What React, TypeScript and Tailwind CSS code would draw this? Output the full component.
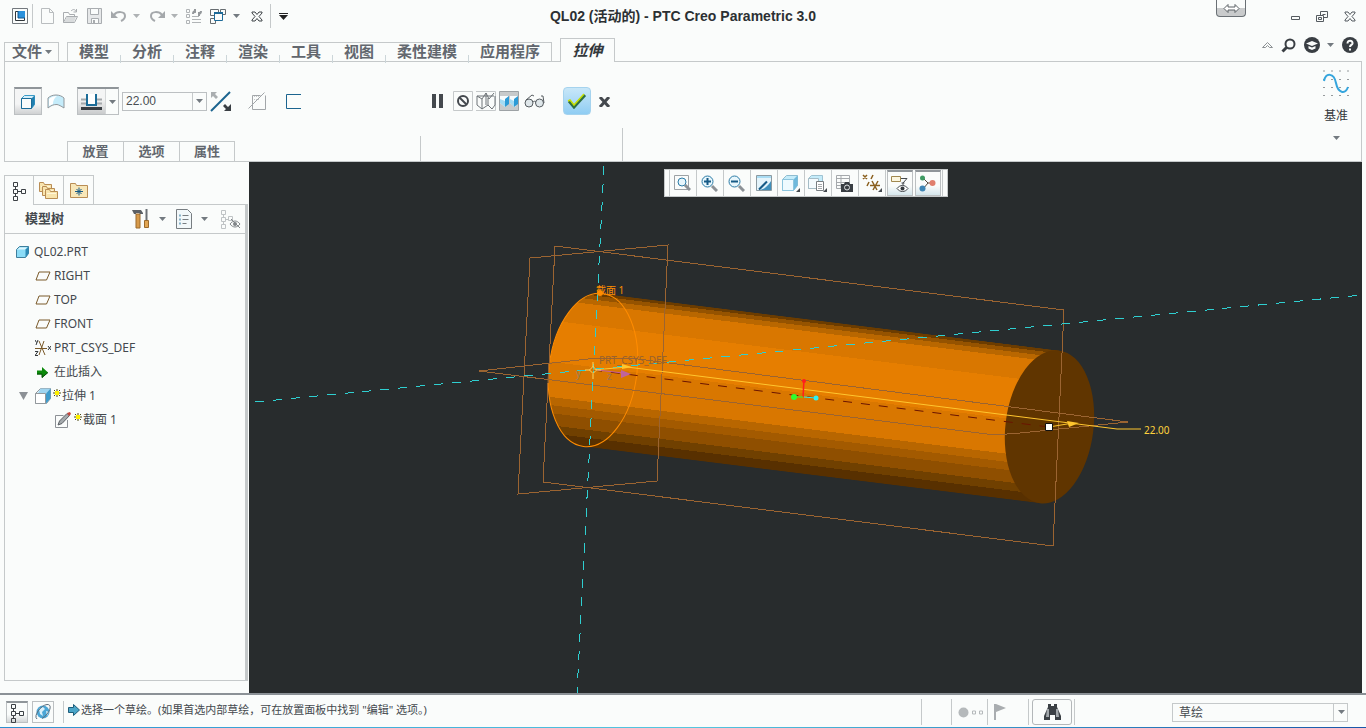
import React, {useState} from "react";

const menuTabs = ["模型", "分析", "注释", "渲染", "工具", "视图", "柔性建模", "应用程序"];
const panelTabs = ["放置", "选项", "属性"];

// shading of the extruded cylinder, from the top edge to the bottom edge
const bands = [
    {from: -77, to: -74, color: "#6b3c00"},
    {from: -74, to: -70, color: "#955300"},
    {from: -70, to: -65, color: "#b96700"},
    {from: -65, to: -44, color: "#d97700"},
    {from: -44, to: -3, color: "#e67e00"},
    {from: -3, to: 32, color: "#d97700"},
    {from: 32, to: 40, color: "#b86600"},
    {from: 40, to: 48, color: "#a35a00"},
    {from: 48, to: 60, color: "#8f4f00"},
    {from: 60, to: 68, color: "#704000"},
    {from: 68, to: 77, color: "#583000"},
];

type IconProps = {
    w: number;
    h: number;
    children: React.ReactNode;
    className?: string;
};

function Icon({w, h, children, className}: IconProps) {
    return (
        <svg width={w} height={h} viewBox={`0 0 ${w} ${h}`} fill="none" className={`shrink-0 ${className ?? ""}`} aria-hidden="true">
            {children}
        </svg>
    );
}

function Caret({color = "#737a80"}: {color?: string}) {
    return (
        <Icon w={7} h={4}>
            <path d="M0 0h7L3.5 4z" fill={color}/>
        </Icon>
    );
}

function TreeGlyph({color = "#3c4145"}: {color?: string}) {
    return (
        <Icon w={14} h={20}>
            <path d="M1.5 1.5h4v4h-4zM1.5 8.500h4v4h-4zM1.500 15.500h4v4h-4zM9.500 8.500h4v4h-4zM3.500 5.500v3M3.500 12.500v3M5.500 10.500h4" stroke={color}/>
        </Icon>
    );
}

function QuickAccess() {
    return (
        <div className="flex h-8 items-center pl-3">
            <button aria-label="Creo">
                <Icon w={16} h={16}>
                    <path d="M.5.5h15v15H.5z" stroke="#73797e"/>
                    <path d="M3.500 3.500h9v9h-9z" fill="#fff" stroke="#30363a"/>
                    <path d="M6 3h7v7H6z" fill="#2a91dc"/>
                    <path d="M6 3v7h7" stroke="#12568c"/>
                </Icon>
            </button>
            <span className="ml-1 h-6 w-px bg-[#c5c9ca]"/>
            <button aria-label="新建" className="ml-2">
                <Icon w={13} h={16}><path d="M.5.5h8l4 4v11H.5zM8.500.5v4h4" stroke="#b9bdbf"/></Icon>
            </button>
            <button aria-label="打开" className="ml-2">
                <Icon w={17} h={16}>
                    <path d="M1.500 14.500v-10h5l1 2h5v2M1.500 14.500l3-6h11l-3 6zM9 3c2-2 4-2 5 .5M14.500 1v3h-3" stroke="#a9adb0"/>
                    <path d="M2 14l3-5h9l-2 5z" fill="#d9dcdd"/>
                </Icon>
            </button>
            <button aria-label="保存" className="ml-2">
                <Icon w={15} h={16}>
                    <path d="M.5.5h14v15H.5z" fill="#e6e8e9" stroke="#a9adb0"/>
                    <path d="M3.500.5h8v6h-8zM4.500 10.500h7v5h-7z" fill="#fafcfb" stroke="#a9adb0"/>
                    <path d="M6 12h2v3H6z" fill="#a9adb0"/>
                </Icon>
            </button>
            <button aria-label="撤消" className="ml-[9px]">
                <Icon w={16} h={12}>
                    <path d="M3 5c3-4 11-4 11 1 0 2-2 4-4 5" stroke="#a4a8ab" strokeWidth="2"/>
                    <path d="M0 1v7h7z" fill="#a4a8ab"/>
                </Icon>
            </button>
            <button aria-label="撤消列表" className="ml-1.5"><Caret color="#aeb2b4"/></button>
            <button aria-label="重做" className="ml-[9px]">
                <Icon w={16} h={12}>
                    <path d="M13 5c-3-4-11-4-11 1 0 2 2 4 4 5" stroke="#a4a8ab" strokeWidth="2"/>
                    <path d="M16 1v7H9z" fill="#a4a8ab"/>
                </Icon>
            </button>
            <button aria-label="重做列表" className="ml-1.5"><Caret color="#aeb2b4"/></button>
            <button aria-label="重新生成" className="ml-2">
                <Icon w={16} h={16}>
                    <path d="M.5 1.500h3v3h-3zM.5 6.500h3v3h-3zM.5 12.500h3v3h-3zM6 8.500h7M6 11.500h9M6 14.500h9" stroke="#b0b4b6"/>
                    <path d="M7 6c0-2 1-3 3-3M9 1v4M15 3c0 2-1 3-3 3M13 4v4" stroke="#94989b" strokeWidth="2"/>
                </Icon>
            </button>
            <button aria-label="窗口" className="ml-2">
                <Icon w={16} h={15}>
                    <path d="M.5.5h8v6h-8zM10.500.5h5v5h-5zM.5 9.500h5v5h-5z" stroke="#666c70"/>
                    <path d="M4.500 3.500h8v8h-8z" fill="#fafcfb" stroke="#1c6a98"/>
                    <path d="M4 4h9" stroke="#1c6a98" strokeWidth="2"/>
                </Icon>
            </button>
            <button aria-label="窗口列表" className="ml-[7px]"><Caret/></button>
            <button aria-label="关闭" className="ml-[11px]">
                <Icon w={12} h={11}>
                    <path d="M1 1h3l2 2.500L8 1h3v1L8 5.500 11 9v1H8L6 7.500 4 10H1V9l3-3.500L1 2z" stroke="#3f4448"/>
                </Icon>
            </button>
            <span className="ml-[7px] h-6 w-px bg-[#c5c9ca]"/>
            <button aria-label="自定义" className="ml-2">
                <Icon w={9} h={7}><path d="M0 .5h9" stroke="#222"/><path d="M0 2h9L4.500 7z" fill="#222"/></Icon>
            </button>
        </div>
    );
}

function TitleBar() {
    return (
        <header className="grid h-[38px] grid-cols-[1fr_auto_1fr] items-start">
            <QuickAccess/>
            <h1 className="font-['Liberation_Sans','Noto_Sans_CJK_SC',sans-serif] text-sm leading-8 font-bold text-[#2c3033]">QL02 (活动的) - PTC Creo Parametric 3.0</h1>
            <div className="flex items-start justify-end pr-2.5">
                <button aria-label="展开" className="mr-[45px] flex h-[17px] w-[30px] items-center justify-center rounded-b border border-t-0 border-[#6a7075] bg-linear-to-b from-[#fafcfb] from-50% to-[#c9cbcc] to-50%">
                    <Icon w={17} h={9}><path d="M1 4.500l4-4v2.500h7V.5l4 4-4 4V6H5v2.500z" fill="#fff" stroke="#5a6065"/></Icon>
                </button>
                <div className="flex h-8 items-center gap-4">
                    <button aria-label="最小化" className="pt-1"><Icon w={9} h={4}><path d="M.5.5h8v3h-8z" stroke="#555b60"/></Icon></button>
                    <button aria-label="还原">
                        <Icon w={12} h={11}>
                            <path d="M4.500.5h7v6h-7zM6.500 3.500h3" stroke="#555b60"/>
                            <path d="M.5 4.500h7v6h-7z" fill="#fafcfb" stroke="#555b60"/><path d="M2.500 6.500h3v2h-3z" stroke="#555b60"/>
                        </Icon>
                    </button>
                    <button aria-label="关闭窗口">
                        <Icon w={12} h={11}><path d="M1 1h3l2 2.500L8 1h3v1L8 5.500 11 9v1H8L6 7.500 4 10H1V9l3-3.500L1 2z" stroke="#555b60"/></Icon>
                    </button>
                </div>
            </div>
        </header>
    );
}

function MenuRow() {
    return (
        <nav className="relative z-10 mx-1 -mb-px flex h-6 items-end text-[15px] font-bold text-[#62676e]">
            <button className="mr-2 flex h-5 w-[55px] items-center gap-[3px] border border-[#c5c9ca] pl-[7px] leading-4">
                <span className="pb-0.5">文件</span> <Caret/>
            </button>
            <div className="flex h-5 border border-[#c5c9ca]">
                {menuTabs.map((tab, i) => (
                    <React.Fragment key={tab}>
                        {i > 0 && <span className="mt-3 h-2 w-px bg-[#ccd6d9]"/>}
                        <button className="px-[11px] pb-0.5 leading-4">{tab}</button>
                    </React.Fragment>
                ))}
            </div>
            <button className="ml-2 h-6 w-[55px] border border-b-0 border-[#c5c9ca] bg-[#fafcfb] pb-0.5 leading-5 text-[#33383c] italic">拉伸</button>
            <div className="mr-1 mb-[9px] ml-auto flex items-center">
                <button aria-label="折叠功能区"><Icon w={11} h={7}><path d="M.5 5.500l5-5 5 5h-3l-2-2-2 2z" stroke="#8c9194"/></Icon></button>
                <button aria-label="搜索" className="ml-2">
                    <Icon w={15} h={15}><circle cx="9" cy="6" r="4.500" stroke="#393e43" strokeWidth="2"/><path d="M5.500 9.500l-4 4" stroke="#393e43" strokeWidth="3"/></Icon>
                </button>
                <button aria-label="学习" className="ml-2">
                    <Icon w={16} h={16}>
                        <circle cx="8" cy="8" r="8" fill="#393e43"/>
                        <path d="M2 6.500L8 4l6 2.500L8 9zM4.500 9L8 10.500 11.500 9v2.500L8 13l-3.500-1.500z" fill="#fafcfb"/>
                    </Icon>
                </button>
                <button aria-label="学习列表" className="ml-[7px]"><Caret/></button>
                <button aria-label="帮助" className="ml-2">
                    <Icon w={16} h={16}>
                        <circle cx="8" cy="8" r="8" fill="#393e43"/>
                        <path d="M5.500 6.500c0-4 5.500-3.500 5 0-.3 1.500-2.500 1.500-2.500 3.500" stroke="#fafcfb" strokeWidth="2"/>
                        <path d="M7 11.500h2v2H7z" fill="#fafcfb"/>
                    </Icon>
                </button>
            </div>
        </nav>
    );
}

function Ribbon() {
    const [depth, setDepth] = useState("22.00");

    return (
        <section className="mx-1 flex h-[101px] border border-[#c5c9ca]">
            <div className="flex w-[415px] flex-col justify-between pt-[25px]">
                <div className="flex h-7 items-center pl-[9px]">
                    <button aria-label="实体" className="flex h-7 w-7 items-center justify-center border border-t-2 border-[#bcc0c2] border-t-[#8f9599] bg-linear-to-b from-[#f4f5f5] from-60% to-[#cfd1d2]">
                        <Icon w={16} h={16}>
                            <path d="M1.500 4.500l3-3h10v9l-3 4h-10z" fill="#d5effb" stroke="#3a9bc7"/>
                            <path d="M11.500 4.500l3-3v9l-3 4z" fill="#1f7fb0"/>
                            <path d="M1.500 4.500h10v10h-10z" fill="#fafcfb" stroke="#1b6c98"/>
                        </Icon>
                    </button>
                    <button aria-label="曲面" className="ml-[5px]">
                        <Icon w={18} h={16}>
                            <path d="M1 5c4-4 12-4 16 0v10c-3-2-5-3-7-3.500-4 0-6 1-9 3.500z" fill="#c5ecfa" stroke="#91979b"/>
                            <path d="M2 6c2-2 5-3 8-3-3 2-4 5-4 8l-4 2z" fill="#fff"/>
                        </Icon>
                    </button>
                    <div className="ml-3 flex h-7 w-[42px] border border-t-2 border-[#bcc0c2] border-t-[#8f9599]">
                        <button aria-label="深度类型" className="flex w-[27px] items-center justify-center bg-linear-to-b from-[#f4f5f5] from-40% to-[#c9cbcc]">
                            <Icon w={21} h={18}>
                                <path d="M0 6.500h6M15 6.500h6M0 10.500h6M15 10.500h6" stroke="#a5a9ac" strokeWidth="2"/>
                                <path d="M6 1v11h9V1" fill="#fff" stroke="#1b6c98" strokeWidth="2"/>
                                <path d="M0 15.500h21" stroke="#393e43" strokeWidth="3"/>
                            </Icon>
                        </button>
                        <button aria-label="深度列表" className="flex flex-1 items-center justify-center border-l border-[#d5d8d9]"><Caret/></button>
                    </div>
                    <div className="ml-[3px] flex h-[19px] w-[85px] border border-[#bcc0c2]">
                        <input
                            aria-label="深度"
                            value={depth}
                            onChange={(e) => setDepth(e.target.value)}
                            className="min-w-0 flex-1 pl-[3px] font-['Liberation_Sans',sans-serif] text-xs text-[#494e52] outline-none"
                        />
                        <button aria-label="深度值列表" className="flex w-[14px] items-center justify-center border-l border-[#c5c9ca]"><Caret/></button>
                    </div>
                    <button aria-label="反向" className="ml-[3px]">
                        <Icon w={22} h={21}>
                            <path d="M1 20L20 1" stroke="#1b648f" strokeWidth="2"/>
                            <path d="M1 1h6L5 3l3 3-2 2-3-3-2 2z" fill="#aaaeb0"/>
                            <path d="M21 20h-7l2-2-3-3 2-2 3 3 3-3z" fill="#393e43"/>
                        </Icon>
                    </button>
                    <button aria-label="移除材料" className="ml-4">
                        <Icon w={19} h={19}>
                            <path d="M4.500 17.500v-14h8M4.500 17.500h13v-14" stroke="#a2a6a9"/>
                            <path d="M6 4.500h8M6 7.500h5" stroke="#c5c9ca" strokeDasharray="1 1"/>
                            <path d="M.5 16.500l16-16" stroke="#a2a6a9"/>
                        </Icon>
                    </button>
                    <button aria-label="加厚草绘" className="ml-[19px]">
                        <Icon w={15} h={15}><path d="M15 .5H.5v14H15" stroke="#1b648f"/></Icon>
                    </button>
                </div>
                <div className="flex pl-[62px]">
                    {panelTabs.map((tab) => (
                        <button key={tab} className="h-5 w-14 border border-r-0 border-b-0 border-[#c5c9ca] pb-0.5 text-[13px] leading-4 font-bold text-[#62676e] last:border-r">
                            {tab}
                        </button>
                    ))}
                </div>
            </div>
            <span className="mt-auto h-[25px] w-px bg-[#c5c9ca]"/>
            <div className="flex w-[201px] items-start pt-[25px]">
                <div className="flex h-7 items-center pl-[11px]">
                    <button aria-label="暂停"><Icon w={11} h={14}><path d="M0 0h4v14H0zM7 0h4v14H7z" fill="#44494e"/></Icon></button>
                    <button aria-label="无预览" className="ml-2.5">
                        <Icon w={20} h={20}>
                            <path d="M.5.5h19v19H.5z" stroke="#c5c9ca"/>
                            <circle cx="10" cy="10" r="5" stroke="#44494e" strokeWidth="2"/><path d="M6.500 6.500l7 7" stroke="#44494e" strokeWidth="2"/>
                        </Icon>
                    </button>
                    <button aria-label="未附着" className="ml-[3px]">
                        <Icon w={20} h={20}>
                            <path d="M0 .5h19.500v19H0" stroke="#c5c9ca"/>
                            <path d="M1 5h17M1 5l5 3 4-6 3 6 5-6M1 5v9l5 4V8M6 18l6-4V7M12 14l4 4 3-4V5M10 2v12" stroke="#6e7478"/>
                        </Icon>
                    </button>
                    <button aria-label="附着" className="ml-[3px]">
                        <Icon w={20} h={20}>
                            <path d="M.5.5h19v19H.5z" fill="#c7cacb" stroke="#9da2a5"/>
                            <path d="M1 5h8v7l-3 4-5-4zM11 5h8v7l-3 4-5-4z" fill="#f7fbfd"/>
                            <path d="M6 8l4-3v8l-4 3zM15 8l4-3v8l-4 3z" fill="#2c9bd6"/>
                            <path d="M1 8l5 2v6l-5-4zM11 8l4 2v6l-4-4z" fill="#a4dbf3"/>
                        </Icon>
                    </button>
                    <button aria-label="预览" className="ml-[5px]">
                        <Icon w={21} h={14}>
                            <circle cx="5" cy="9" r="4" fill="#dfe7ea" stroke="#565c60"/><circle cx="15.500" cy="9" r="4" fill="#dfe7ea" stroke="#565c60"/>
                            <path d="M9 8c1-1 2-1 3 0M2 6l6-5 2 1M17 2h2l1 7" stroke="#565c60"/>
                        </Icon>
                    </button>
                    <button aria-label="确定" className="ml-[18px] flex h-7 w-7 items-center justify-center rounded-sm border border-[#a5d3ee] bg-linear-to-b from-[#c8e7f8] to-[#8fcdf3]">
                        <Icon w={20} h={16}>
                            <path d="M2 8l5 6L18 2" stroke="#2f6f45" strokeWidth="3"/>
                            <path d="M1 8l2-1 4 5L17 1" stroke="#c5e000" strokeWidth="1.500"/>
                        </Icon>
                    </button>
                    <button aria-label="取消" className="ml-[7px] pt-0.5"><Icon w={13} h={10}><path d="M2 0l9 10M11 0L2 10" stroke="#44494e" strokeWidth="3"/></Icon></button>
                </div>
            </div>
            <span className="mt-auto h-[33px] w-px bg-[#c5c9ca]"/>
            <button className="mr-[7px] ml-auto flex w-9 flex-col items-center self-start pt-2 text-xs leading-4 text-[#33383c]">
                <Icon w={26} h={28}>
                    <path d="M.5 1h1M8.500 1h1M16.500 1h1M24.500 1h1M.5 9.500h1M8.500 9.500h1M16.500 9.500h1M24.500 9.500h1M.5 17.500h1M8.500 17.500h1M16.500 17.500h1M24.500 17.500h1M.5 25.500h1M8.500 25.500h1M16.500 25.500h1M24.500 25.500h1" stroke="#33383c"/>
                    <path d="M1 11c2-9 10-8 12 2s9 12 12 4" stroke="#35a5dd" strokeWidth="2"/>
                </Icon>
                <span className="mt-2.5 mb-3">基准</span>
                <Caret/>
            </button>
        </section>
    );
}

function Folder() {
    return (
        <>
            <path d="M.5 2.500h4l1 2h7v7H.5z" fill="#f8e4ad" stroke="#b98d54"/>
            <path d="M2 6h9v1H2z" fill="#fff6d8"/>
        </>
    );
}

function PlaneIcon() {
    return <Icon w={16} h={10}><path d="M4 1h11l-3.500 8H1z" stroke="#7a5a2a"/></Icon>;
}

function Spark() {
    return (
        <Icon w={9} h={8} className="mb-1.5">
            <path d="M4 0v8M0 4h8M1 1l6 6M7 1L1 7" stroke="#4c4a10"/>
            <path d="M2 2h4v4H2z" fill="#fff200"/>
        </Icon>
    );
}

function ModelTree() {
    return (
        <aside className="flex w-[249px] shrink-0 flex-col pt-[13px] pr-px pb-3 pl-1">
            <div className="relative z-10 -mb-px flex h-[30px]">
                <button aria-label="模型树" className="flex w-[30px] items-center justify-center border border-b-0 border-[#c5c9ca] bg-[#fafcfb]"><TreeGlyph/></button>
                <button aria-label="文件夹浏览器" className="flex w-[30px] items-center justify-center border border-l-0 border-[#c5c9ca]">
                    <Icon w={20} h={20}>
                        <g><Folder/></g>
                        <g transform="translate(3 4)"><Folder/></g>
                        <g transform="translate(6 7)"><Folder/></g>
                    </Icon>
                </button>
                <button aria-label="收藏夹" className="flex w-[30px] items-center justify-center border border-l-0 border-[#c5c9ca]">
                    <Icon w={18} h={16}>
                        <path d="M.5 1.500h5l1 2h11v12H.5z" fill="#f8e7b8" stroke="#b98d54"/>
                        <path d="M9 5.500v8M5 9.500h8M6.500 7l5 5M11.500 7l-5 5" stroke="#155a86"/>
                    </Icon>
                </button>
            </div>
            <div className="flex flex-1 flex-col border border-r-3 border-[#c5c9ca]">
                <div className="flex h-[29px] items-center border-b border-[#c5c9ca] pl-5">
                    <h2 className="text-[13px] font-bold text-[#44494e]">模型树</h2>
                    <button aria-label="设置" className="ml-auto">
                        <Icon w={18} h={20}>
                            <path d="M4 5h4v14H4z" fill="#d79a4a" stroke="#9b6a2c"/>
                            <path d="M0 1h9l2 3v1H8L7 4H4v1H2z" fill="#5b6065"/>
                            <path d="M14.500 0v11" stroke="#6a7075" strokeWidth="2"/>
                            <path d="M12.500 11.500h4v7h-4z" fill="#e2a653" stroke="#9b6a2c"/>
                        </Icon>
                    </button>
                    <button aria-label="设置列表" className="ml-[9px]"><Caret/></button>
                    <button aria-label="显示" className="ml-2.5">
                        <Icon w={16} h={20}>
                            <path d="M.5.5h11l4 4v15H.5z" fill="#f2f8fa" stroke="#777d81"/>
                            <path d="M3.500 6.500h1M3.500 10.500h1M3.500 14.500h1" stroke="#1b6c98" strokeWidth="2"/>
                            <path d="M6.500 6.500h6M6.500 10.500h6M6.500 14.500h4" stroke="#777d81"/>
                        </Icon>
                    </button>
                    <button aria-label="显示列表" className="ml-[9px]"><Caret/></button>
                    <button aria-label="隐藏" className="mr-1 ml-3">
                        <Icon w={21} h={20}>
                            <path d="M1.500 1.500h4v4h-4zM1.500 8.500h4v4h-4zM1.500 15.500h4v4h-4zM8.500 7.500h4v4h-4zM3.500 5.500v3M3.500 12.500v3M5.500 10.500h3" stroke="#bfc3c5"/>
                            <path d="M10 15c3-4 7-4 10 0-3 4-7 4-10 0zM11 10l9 9" stroke="#808588"/><circle cx="15" cy="15" r="2" fill="#808588"/>
                        </Icon>
                    </button>
                </div>
                <ul className="pt-1.5 text-xs leading-6 text-[#44494e]">
                    <li className="flex items-center gap-[5px] pl-[11px]">
                        <Icon w={13} h={12}>
                            <path d="M.5 3.500l3-3h9v7l-3 4h-9z" fill="#8bdcf7" stroke="#3f7f9c"/>
                            <path d="M9.500 3.500l3-3v7l-3 4z" fill="#2d8ab5"/><path d="M1 3.500l3-2h7l-2 2z" fill="#dff6fd"/>
                        </Icon>
                        QL02.PRT
                    </li>
                    {["RIGHT", "TOP", "FRONT"].map((name) => (
                        <li key={name} className="flex items-center gap-[3px] pl-[30px]"><PlaneIcon/>{name}</li>
                    ))}
                    <li className="flex items-center gap-[3px] pl-[30px]">
                        <Icon w={16} h={16}>
                            <path d="M0 8.500h12M4 1l6 14M9 1L4 15" stroke="#7a5a2a"/>
                            <path d="M0 0l1.500 2.500M3 0L1 5M0 11.500h3L0 15.500h3M13 6l3 4M16 6l-3 4" stroke="#33383c"/>
                        </Icon>
                        PRT_CSYS_DEF
                    </li>
                    <li className="flex items-center gap-1.5 pl-8">
                        <Icon w={11} h={11}><path d="M0 3.500h5V0l6 5.500L5 11V7.500H0z" fill="#0b8a0b"/><path d="M0 7h5v3.500L11 5.500" stroke="#064d06"/></Icon>
                        在此插入
                    </li>
                    <li className="flex items-center pl-3.5">
                        <Icon w={9} h={8}><path d="M0 0h9L4.500 8z" fill="#8c9196"/></Icon>
                        <Icon w={16} h={16} className="mr-0.5 ml-[7px]">
                            <path d="M.5 5.500l5-5h10v10l-4 5H.5z" fill="#d8eef8" stroke="#93999d"/>
                            <path d="M5.500.5h10l-4.500 5H3z" fill="#9fd4ef"/><path d="M11 5.500l4.500-5v10l-4.500 5z" fill="#3f9bcb"/>
                            <path d="M.5 5.500h10v10H.5z" fill="#fff" stroke="#93999d"/>
                        </Icon>
                        <Spark/>
                        <span>拉伸 1</span>
                    </li>
                    <li className="flex items-center gap-[3px] pl-[50px]">
                        <Icon w={16} h={16}>
                            <path d="M12.500 8v7.500H.5v-12h8" stroke="#8c9196"/>
                            <path d="M3 13l1.500-4L12 1.500l2.500 2L7 11.500z" fill="#a5aaad" stroke="#5b6065"/>
                            <path d="M12 1l3-1 1 2-2 2z" fill="#c8443b"/>
                        </Icon>
                        <span className="flex items-center"><Spark/>截面 1</span>
                    </li>
                </ul>
            </div>
        </aside>
    );
}

function ViewToolbar() {
    const cell = "flex flex-1 items-center justify-center border-r border-[#c5c9ca]";
    const pressed = "mx-px flex w-[26px] items-center justify-center border border-t-2 border-[#bcc0c2] border-t-[#8f9599] bg-linear-to-b from-[#fafcfb] from-60% to-[#d5e6ec]";
    return (
        <div className="absolute top-[7px] left-1/2 flex h-7 w-[284px] -translate-x-1/2 border border-[#c5c9ca] bg-[#fafcfb]">
            <span className="w-[5px] border-r border-[#c5c9ca]"/>
            <button aria-label="重新调整" className={cell}>
                <Icon w={17} h={17}>
                    <path d="M.5.5h14v14H.5z" stroke="#9da2a5"/><circle cx="8" cy="7" r="4" fill="#e7f6fc" stroke="#2b7ba6"/>
                    <path d="M11 10l5 5" stroke="#8c9196" strokeWidth="3"/>
                </Icon>
            </button>
            <button aria-label="放大" className={cell}>
                <Icon w={17} h={17}>
                    <circle cx="6.500" cy="6.500" r="5.500" fill="#e7f6fc" stroke="#2b7ba6"/><path d="M6.500 3v7M3 6.500h7" stroke="#155a86" strokeWidth="2"/>
                    <path d="M11 11l5 5" stroke="#8c9196" strokeWidth="3"/>
                </Icon>
            </button>
            <button aria-label="缩小" className={cell}>
                <Icon w={17} h={17}>
                    <circle cx="6.500" cy="6.500" r="5.500" fill="#e7f6fc" stroke="#2b7ba6"/><path d="M3 6.500h7" stroke="#155a86" strokeWidth="2"/>
                    <path d="M11 11l5 5" stroke="#8c9196" strokeWidth="3"/>
                </Icon>
            </button>
            <button aria-label="重画" className={cell}>
                <Icon w={16} h={16}>
                    <path d="M.5.5h15v15H.5z" fill="#a9dcf3" stroke="#8c9aa1"/><path d="M1 3h14v4L6 15H1z" fill="#e4f4fb"/>
                    <path d="M15 6v9H4c5-1 8-4 11-9z" fill="#3f8fbb"/><path d="M3 14.500l8-8" stroke="#155a86" strokeWidth="2"/>
                </Icon>
            </button>
            <button aria-label="显示样式" className={cell}>
                <Icon w={18} h={17}>
                    <path d="M.5 4.500l4-4h11v10l-4 5H.5z" fill="#c5ecfa" stroke="#8fbcd0"/><path d="M11.500 4.500l4-4v10l-4 5z" fill="#6fb9dc"/>
                    <path d="M.5 4.500h11v11H.5z" fill="#eefaff" stroke="#8cc5de"/><path d="M18 13v4h-4z" fill="#44494e"/>
                </Icon>
            </button>
            <button aria-label="已保存方向" className={cell}>
                <Icon w={19} h={17}>
                    <path d="M.5 3.500l3-3h11v10l-3 3H.5z" fill="#c5ecfa" stroke="#9fc3d2"/><path d="M.5 3.500h10v10H.5z" fill="#f4fbfe" stroke="#a5bcc6"/>
                    <path d="M8.500 6.500h7v9h-7z" fill="#fff" stroke="#777d81"/><path d="M10 9.500h4M10 11.500h4M10 13.500h4" stroke="#a5a9ac"/><path d="M19 13v4h-4z" fill="#44494e"/>
                </Icon>
            </button>
            <button aria-label="视图管理器" className={cell}>
                <Icon w={17} h={17}>
                    <path d="M.5.5h13v13H.5zM.5 3.500h13M.5 7.500h13M.5 10.500h13M5 .5v13" stroke="#a5a9ac"/>
                    <path d="M5 9h3l1-2h4l1 2h3v8H5z" fill="#393e43"/><circle cx="11" cy="12.500" r="2.500" stroke="#dfe2e3"/>
                </Icon>
            </button>
            <button aria-label="基准显示过滤器" className={cell}>
                <Icon w={20} h={18}>
                    <path d="M1 1l4 4M5 1L1 5M11 1L9 5M7 8l-2 4M8 11.500h10M10 7l5 9M16 7l-5 9" stroke="#8a5f1e" strokeWidth="1.500"/>
                    <path d="M20 14v4h-4z" fill="#44494e"/>
                </Icon>
            </button>
            <button aria-label="注释显示" className={pressed}>
                <Icon w={18} h={18}>
                    <path d="M.5 1.500h9v5h-9z" fill="#fbf6df" stroke="#a0884f"/><path d="M10 3.500h6L12 8v2.500M10.500 8h3" stroke="#44494e"/>
                    <path d="M6 13.500c3-4 8-4 11 0-3 4-8 4-11 0z" fill="#fff" stroke="#44494e"/><circle cx="11.500" cy="13.500" r="2" fill="#33383c"/>
                </Icon>
            </button>
            <button aria-label="旋转中心" className={pressed}>
                <Icon w={17} h={17}>
                    <path d="M4 3l5 5h5M9 8l-5 6" stroke="#55483c"/>
                    <circle cx="3.500" cy="3" r="2.500" fill="#3f9b63"/><circle cx="13.500" cy="8" r="3" fill="#e07f6d"/><circle cx="3.500" cy="13.500" r="3" fill="#3f86b5"/>
                </Icon>
            </button>
            <span className="w-[5px] border-l border-[#c5c9ca]"/>
        </div>
    );
}

function Viewport() {
    return (
        <main className="relative mr-1 flex-1 overflow-hidden bg-[#282c2d]">
            <svg viewBox="249 162 1113 531" preserveAspectRatio="xMidYMid slice" className="absolute inset-0 h-full w-full" fill="none">
                <clipPath id="body"><path d="M0-77A44 77 0 0 0 0 77H460V-77z"/></clipPath>
                <g transform="translate(593 370) rotate(7.100)">
                    <g clipPath="url(#body)" shapeRendering="crispEdges">
                        {bands.map((b) => (
                            <rect key={b.from} x="-50" y={b.from} width="520" height={b.to - b.from + 1} fill={b.color}/>
                        ))}
                    </g>
                    <ellipse cx="460" cy="0" rx="44" ry="77" fill="#603500"/>
                    <ellipse cx="0" cy="0" rx="44" ry="77" stroke="#ff8c00"/>
                </g>
                <g stroke="#9b6431" shapeRendering="crispEdges">
                    <path d="M530 258L668 245 657 481 518 494z"/>
                    <path d="M555 246L1064 310 1053 546 543 482z"/>
                    <path d="M479 371L597 358H630L1128 422 1020 433 995 435z"/>
                </g>
                <g stroke="#2fcfd0" strokeDasharray="9 9" shapeRendering="crispEdges">
                    <path d="M604 166L577 693"/>
                    <path d="M255 402L1362 295"/>
                </g>
                <path d="M593 370L1049 427" stroke="#6a1400" strokeDasharray="9 9"/>
                <path d="M593 370l34-3 490 62h24M1049 427l24-4" stroke="#ffc62e"/>
                <path d="M632 367l-10-3v5zM1067 421l12 2-10 4z" fill="#ffc62e"/>
                <path d="M597 370l26 3" stroke="#c65f9a"/><path d="M621 370l10 4-10 4z" fill="#c0649c"/>
                <path d="M593 362v5M593 374v5M585 370h5M596 370h5" stroke="#ffd45a"/><path d="M593 366.500l3.500 3.500-3.500 3.500-3.500-3.500z" stroke="#ffd45a"/>
                <path d="M803 397l1-17" stroke="#ff1e1e" strokeWidth="1.500"/><circle cx="804" cy="381" r="2" fill="#ff1e1e"/>
                <path d="M794 397h9" stroke="#2fff2f"/><circle cx="794" cy="397" r="3" fill="#2fff2f"/>
                <path d="M804 397l12 1" stroke="#2ff0f0"/><circle cx="816" cy="398" r="2.500" fill="#2ff0f0"/>
                <path d="M1045.500 423.500h7v7h-7z" fill="#fff" stroke="#111"/>
                <circle cx="600" cy="293" r="3" fill="#ff8c00"/>
                <g fontSize="10">
                    <text x="596" y="294" fill="#ff8c00">截面 1</text>
                    <text x="599" y="364" fill="#99622c">PRT_CSYS_DEF</text>
                    <text x="576" y="377" fill="#998055">y</text>
                    <text x="607" y="380" fill="#a0744f">z</text>
                    <text x="1144" y="434" fill="#ffd23c">22.00</text>
                </g>
            </svg>
            <ViewToolbar/>
        </main>
    );
}

function StatusBar() {
    return (
        <footer className="shrink-0 border-t-2 border-[#8b9196]">
            <div className="flex h-8 items-center pt-0.5 pl-1.5">
                <button aria-label="导航器" className="flex h-[22px] w-[22px] items-center justify-center border border-t-2 border-[#bcc0c2] border-t-[#8f9599] bg-linear-to-b from-[#fafcfb] from-60% to-[#d3d6d7]"><TreeGlyph/></button>
                <button aria-label="浏览器" className="ml-1 flex h-[22px] w-[22px] items-center justify-center border border-[#bcc0c2]">
                    <Icon w={18} h={18}>
                        <circle cx="9" cy="9" r="6.500" fill="#4ba6d6"/><path d="M5 6l4-2 2 2-3 3 1 4-3-2zM12 8l3 1-2 4z" fill="#d9f0fa"/>
                        <path d="M3 16C-1 13 7 2 13 1.500c6-.5 3 9-5 14" stroke="#5b6b78"/>
                    </Icon>
                </button>
                <span className="ml-[9px] h-[22px] w-px bg-[#c5c9ca]"/>
                <div className="ml-1 flex items-center pb-1">
                    <Icon w={12} h={12}><path d="M.5 3.500h5v-3l6 5.500-6 5.500v-3h-5z" fill="#4aa5c8" stroke="#1d5d7b"/></Icon>
                    <p className="ml-px text-[11px] text-[#44494e]">选择一个草绘。(如果首选内部草绘，可在放置面板中找到 "编辑" 选项。)</p>
                </div>
                <div className="ml-auto flex h-[26px] items-center pr-[18px]">
                    <span className="h-[26px] w-px bg-[#c5c9ca]"/>
                    <span className="ml-[29px] h-[26px] w-px bg-[#c5c9ca]"/>
                    <Icon w={25} h={11} className="ml-1.5">
                        <circle cx="5.500" cy="5.500" r="5" fill="#b5b9bb"/><path d="M14.500 4h3v3h-3zM21.500 4h3v3h-3z" stroke="#b5b9bb"/>
                    </Icon>
                    <span className="ml-1 h-[26px] w-px bg-[#c5c9ca]"/>
                    <Icon w={12} h={16} className="ml-1.5"><path d="M0 0h2l10 4-10 4v8H0z" fill="#a9adb0"/></Icon>
                    <span className="ml-[22px] h-[26px] w-px bg-[#c5c9ca]"/>
                    <button aria-label="查找" className="ml-[3px] flex h-[26px] w-10 items-center justify-center rounded-[3px] border border-[#b3b7b9]">
                        <Icon w={17} h={16}>
                            <path d="M4 0h3v2h3V0h3v3l4 9v4h-6v-5H6v5H0v-4l4-9z" fill="#3b4045"/>
                            <path d="M3 5h2v8H2zM12 5h2l1 8h-3z" fill="#a2a7ab"/>
                        </Icon>
                    </button>
                    <span className="ml-0.5 h-[26px] w-px bg-[#c5c9ca]"/>
                    <div className="relative ml-[97px]">
                        <select aria-label="选择过滤器" className="block h-[19px] w-44 appearance-none border border-[#c5c9ca] pl-1.5 text-xs leading-[17px] text-[#44494e]">
                            <option>草绘</option>
                        </select>
                        <span className="pointer-events-none absolute inset-y-0 right-0 flex w-[15px] items-center justify-center border-l border-[#c5c9ca]"><Caret/></span>
                    </div>
                </div>
            </div>
            <div className="h-px bg-linear-to-r from-[#2b8fd0] via-[#55c8e0] to-[#1a56a8]"/>
        </footer>
    );
}

export default function App() {
    return (
        <div className="flex min-h-screen flex-col bg-[#fafcfb] font-['Noto_Sans','Noto_Sans_CJK_SC',sans-serif]">
            <TitleBar/>
            <MenuRow/>
            <Ribbon/>
            <div className="flex flex-1">
                <ModelTree/>
                <Viewport/>
            </div>
            <StatusBar/>
        </div>
    );
}
